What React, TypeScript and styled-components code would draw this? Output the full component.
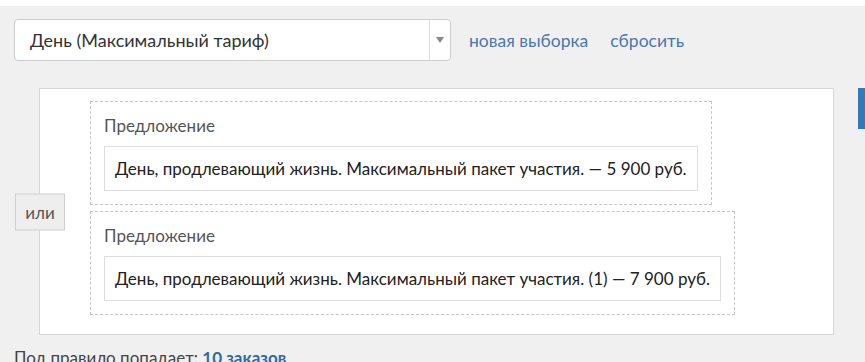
import styled, { createGlobalStyle } from "styled-components";

const GlobalStyle = createGlobalStyle`
  html, body {
    margin: 0;
    padding: 0;
    background: #ffffff;
    font-family: Lato, "Open Sans", Arial, sans-serif;
  }
  * {
    box-sizing: border-box;
  }
`;

const offers = [
  "День, продлевающий жизнь. Максимальный пакет участия. — 5 900 руб.",
  "День, продлевающий жизнь. Максимальный пакет участия. (1) — 7 900 руб.",
];

export default function App() {
  return (
    <>
      <GlobalStyle />
      <Page>
        <Toolbar>
          <Select>
            <SelectValue>День (Максимальный тариф)</SelectValue>
            <SelectArrow>
              <svg width="8" height="6" viewBox="0 0 8 6">
                <path d="M0 0 L8 0 L4 6 Z" fill="#888" />
              </svg>
            </SelectArrow>
          </Select>
          <Links>
            <LinkText>новая выборка</LinkText>
            <LinkText>сбросить</LinkText>
          </Links>
        </Toolbar>
        <BodyRow>
          <RulePanel>
            <OrButton>или</OrButton>
            <OfferList>
              {offers.map((text) => (
                <OfferBox key={text}>
                  <OfferLabel>Предложение</OfferLabel>
                  <OfferValue>{text}</OfferValue>
                </OfferBox>
              ))}
            </OfferList>
          </RulePanel>
          <SideButton />
        </BodyRow>
        <Footer>
          Под правило попадает: <strong>10 заказов</strong>
        </Footer>
      </Page>
    </>
  );
}

const Page = styled.div`
  margin-top: 6px;
  height: 356px;
  overflow: hidden;
  background: #f0f0f0;
  padding: 13px 0 0 14px;
`;

const Toolbar = styled.div`
  display: flex;
  align-items: center;
  gap: 18px;
`;

const Select = styled.div`
  width: 437px;
  height: 42px;
  display: flex;
  align-items: stretch;
  background: #ffffff;
  border: 1px solid #cccccc;
  border-radius: 4px;
`;

const SelectValue = styled.div`
  flex: 1;
  padding-left: 15px;
  line-height: 40px;
  font-size: 18px;
  color: #333333;
`;

const SelectArrow = styled.div`
  width: 21px;
  border-left: 1px solid #dddddd;
  display: flex;
  align-items: center;
  justify-content: center;
`;

const Links = styled.div`
  display: flex;
  gap: 22px;
`;

const LinkText = styled.a`
  font-size: 17.5px;
  color: #4a78ad;
  cursor: pointer;
`;

const BodyRow = styled.div`
  display: flex;
  align-items: flex-start;
  margin-top: 27px;
`;

const RulePanel = styled.div`
  position: relative;
  width: 795px;
  margin-left: 25px;
  flex-shrink: 0;
  background: #ffffff;
  border: 1px solid #d6d6d6;
  padding: 12px 50px 19px 50px;
`;

const OrButton = styled.div`
  position: absolute;
  left: -25px;
  top: 50%;
  transform: translateY(-50%);
  width: 50px;
  height: 37px;
  background: #eeeeee;
  border: 1px solid #cfcfcf;
  display: flex;
  align-items: center;
  justify-content: center;
  font-size: 17px;
  color: #555555;
`;

const OfferList = styled.div`
  display: flex;
  flex-direction: column;
  align-items: flex-start;
  gap: 6px;
`;

const OfferBox = styled.div`
  border: 1px dashed #c6c6c6;
  padding: 13px;
`;

const OfferLabel = styled.div`
  font-size: 17px;
  line-height: 22px;
  color: #555555;
  margin-bottom: 9px;
`;

const OfferValue = styled.div`
  height: 45px;
  line-height: 43px;
  border: 1px solid #dddddd;
  padding: 0 10px;
  font-size: 17px;
  color: #222222;
  white-space: nowrap;
`;

const SideButton = styled.div`
  flex-shrink: 0;
  margin-left: 24px;
  width: 60px;
  height: 41px;
  background: #337ab7;
`;

const Footer = styled.div`
  margin-top: 12px;
  font-size: 17px;
  line-height: 22px;
  color: #444444;
  strong {
    color: #2c6aa8;
  }
`;
